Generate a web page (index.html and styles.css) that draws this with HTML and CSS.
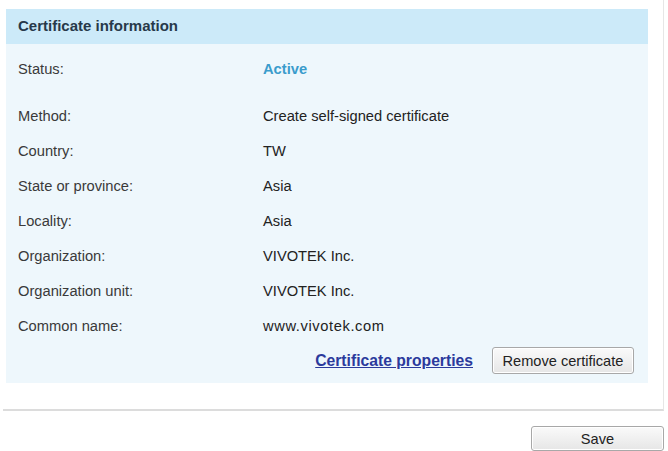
FILE: index.html
```html
<!DOCTYPE html>
<html>
<head>
<meta charset="utf-8">
<link rel="stylesheet" href="styles.css">
</head>
<body>
<div class="frame">
  <div class="panel">
    <div class="panel-head">Certificate information</div>
    <div class="panel-body">
      <div class="row status-row"><span class="label">Status:</span><span class="value active">Active</span></div>
      <div class="row"><span class="label">Method:</span><span class="value">Create self-signed certificate</span></div>
      <div class="row"><span class="label">Country:</span><span class="value">TW</span></div>
      <div class="row"><span class="label">State or province:</span><span class="value">Asia</span></div>
      <div class="row"><span class="label">Locality:</span><span class="value">Asia</span></div>
      <div class="row"><span class="label">Organization:</span><span class="value">VIVOTEK Inc.</span></div>
      <div class="row"><span class="label">Organization unit:</span><span class="value">VIVOTEK Inc.</span></div>
      <div class="row"><span class="label">Common name:</span><span class="value wide">www.vivotek.com</span></div>
      <div class="actions">
        <a class="link" href="#">Certificate properties</a>
        <button class="btn remove">Remove certificate</button>
      </div>
    </div>
  </div>
</div>
<div class="footer">
  <button class="btn save">Save</button>
</div>
</body>
</html>
```
FILE: styles.css
```css
html, body {
  margin: 0;
  padding: 0;
  background: #ffffff;
  font-family: "Liberation Sans", Arial, sans-serif;
  font-size: 14.7px;
  color: #333;
}
.frame {
  margin-left: 3px;
  width: 643px;
  padding: 9px 14px 26px 3px;
  border-right: 1px solid #e6e6e6;
  border-bottom: 2px solid #dcdcdc;
}
.panel {
  width: 642px;
  background: #eef7fc;
}
.panel-head {
  height: 35px;
  line-height: 34px;
  padding-left: 12px;
  background: #cceaf9;
  font-weight: bold;
  color: #27394a;
  font-size: 15px;
}
.panel-body {
  padding: 7px 14px 5px 12px;
}
.row {
  display: grid;
  grid-template-columns: 245px 1fr;
  height: 35px;
  align-items: center;
}
.status-row {
  margin-bottom: 12px;
}
.label {
  color: #3a3a3a;
}
.value {
  color: #222;
}
.value.wide {
  letter-spacing: 0.6px;
}
.active {
  color: #3a9ccc;
  font-weight: bold;
}
.actions {
  display: flex;
  justify-content: flex-end;
  align-items: center;
  gap: 19px;
  height: 35px;
}
.link {
  color: #2b3a9c;
  font-weight: bold;
  font-size: 15.7px;
  text-decoration: underline;
}
.btn {
  font-family: "Liberation Sans", Arial, sans-serif;
  font-size: 14.6px;
  color: #222;
  border: 1px solid #a8a8a8;
  border-radius: 3px;
  background: linear-gradient(#fafafa, #e6e6e6);
  box-shadow: inset 0 0 0 1px #ffffff;
  padding: 0;
}
.remove {
  width: 142px;
  height: 27px;
}
.footer {
  display: flex;
  justify-content: flex-end;
  padding: 15px 4px 0 0;
}
.save {
  width: 133px;
  height: 25px;
}
```
